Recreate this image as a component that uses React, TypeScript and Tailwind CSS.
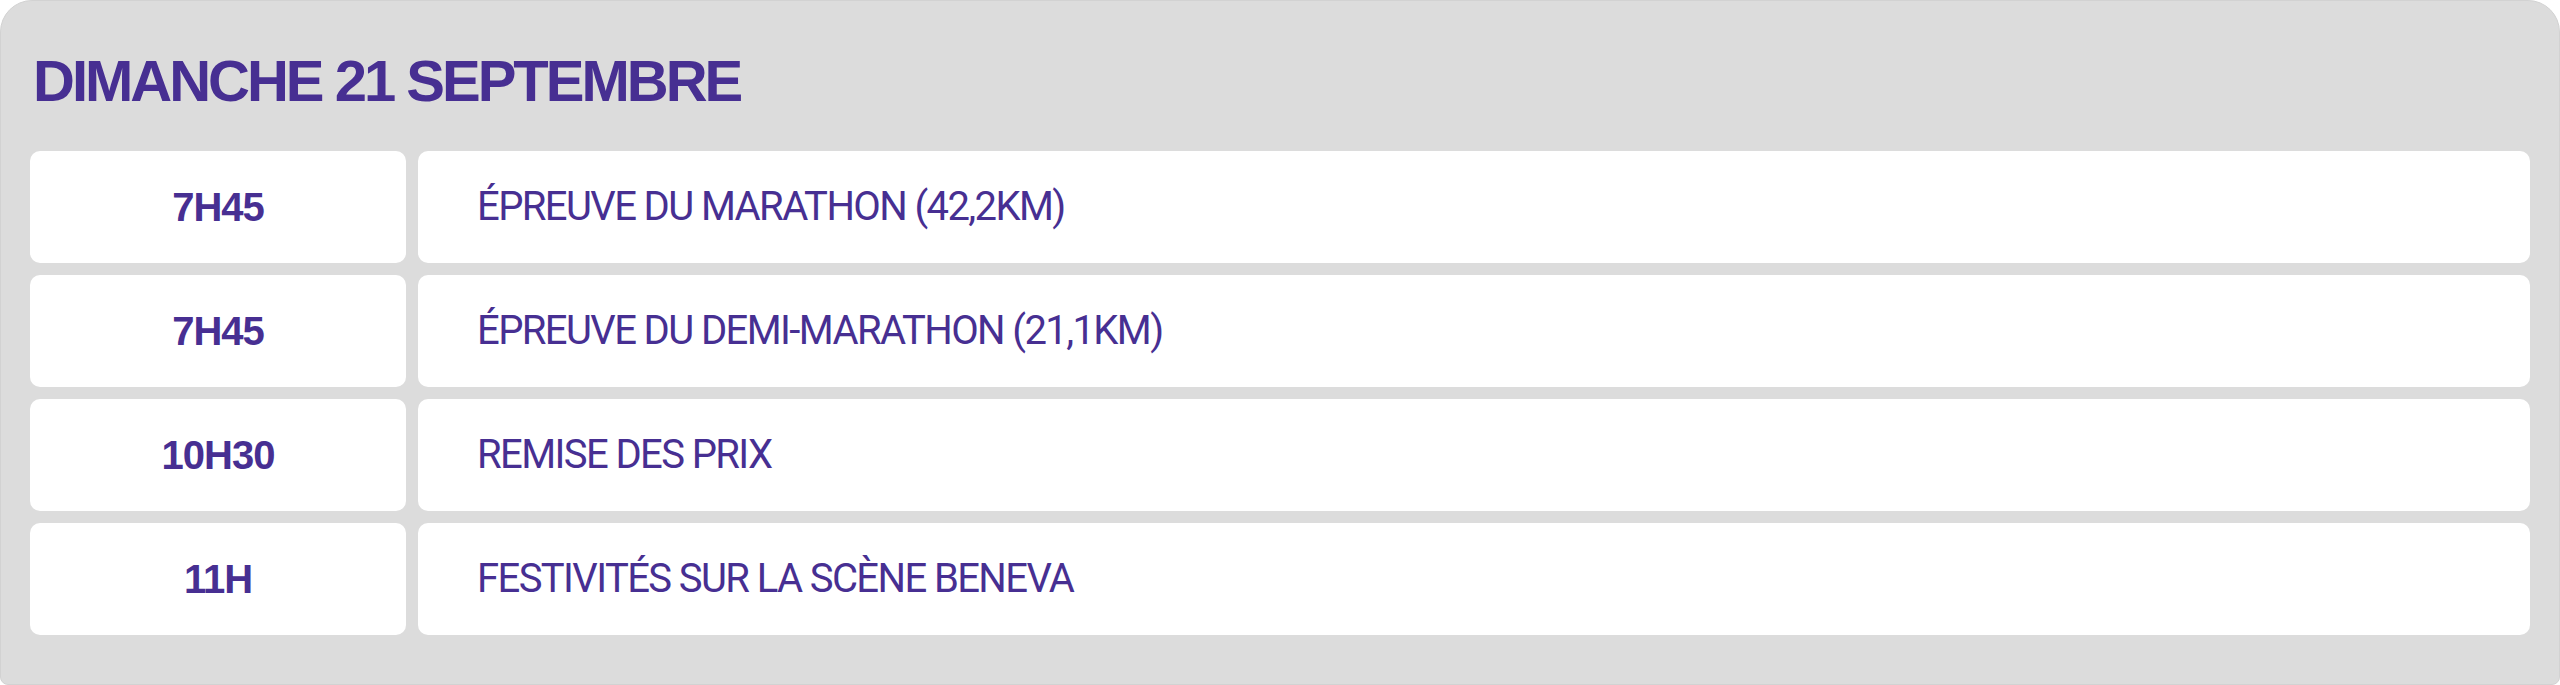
import React from "react";

type ScheduleItem = {
    time: string;
    label: string;
};

const schedule: ScheduleItem[] = [
    { time: "7H45", label: "ÉPREUVE DU MARATHON (42,2KM)" },
    { time: "7H45", label: "ÉPREUVE DU DEMI-MARATHON (21,1KM)" },
    { time: "10H30", label: "REMISE DES PRIX" },
    { time: "11H", label: "FESTIVITÉS SUR LA SCÈNE BENEVA" },
];

const App: React.FC = () => {
    return (
        <div className="w-full h-[685px] bg-[#dcdcdc] border border-[#d2d2d2] rounded-t-[32px] rounded-b-[8px] px-[29px] pt-[51px] pb-[48px] text-[#472f92]">
            <h1 className="font-['Liberation_Sans',Arial,sans-serif] font-bold text-[58px] leading-[58px] tracking-[-3px] pl-[3px]">
                DIMANCHE 21 SEPTEMBRE
            </h1>

            {/* Schedule rows */}
            <div className="mt-[41px] flex flex-col gap-[12px]">
                {schedule.map((item, i) => (
                    <div key={i} className="flex gap-[12px] h-[112px]">
                        <div className="w-[376px] shrink-0 bg-white rounded-[10px] flex items-center justify-center">
                            <span className="font-['Liberation_Sans',Arial,sans-serif] font-bold text-[40px] leading-none tracking-[-1px]">
                                {item.time}
                            </span>
                        </div>
                        <div className="flex-1 bg-white rounded-[10px] flex items-center pl-[59px]">
                            <span className="font-['Roboto',sans-serif] text-[40px] leading-none tracking-[-0.04em]">
                                {item.label}
                            </span>
                        </div>
                    </div>
                ))}
            </div>
        </div>
    );
};

export default App;
